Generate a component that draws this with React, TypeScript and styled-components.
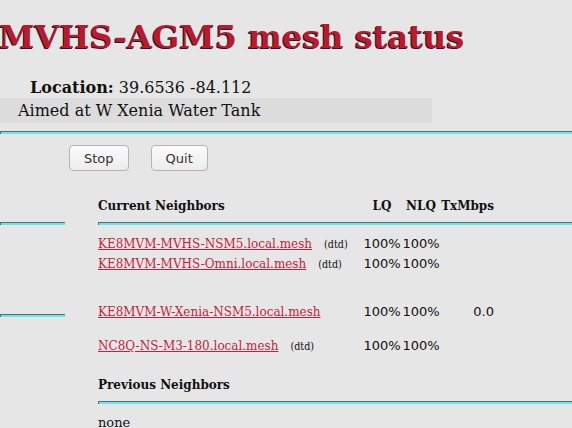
import styled, { createGlobalStyle } from "styled-components";

const GlobalStyle = createGlobalStyle`
  html, body {
    margin: 0;
    padding: 0;
    background: #e6e6e6;
    overflow: hidden;
  }
  body {
    width: 572px;
    height: 428px;
    font-family: "DejaVu Serif", serif;
    color: #111;
  }
`;

type Neighbor = {
  name: string;
  dtd: boolean;
  lq: string;
  nlq: string;
  mbps?: string;
  gap: number;
};

const neighbors: Neighbor[] = [
  { name: "KE8MVM-MVHS-NSM5.local.mesh", dtd: true, lq: "100%", nlq: "100%", gap: 0 },
  { name: "KE8MVM-MVHS-Omni.local.mesh", dtd: true, lq: "100%", nlq: "100%", gap: 0 },
  { name: "KE8MVM-W-Xenia-NSM5.local.mesh", dtd: false, lq: "100%", nlq: "100%", mbps: "0.0", gap: 28 },
  { name: "NC8Q-NS-M3-180.local.mesh", dtd: true, lq: "100%", nlq: "100%", gap: 15 },
];

const Page = styled.div`
  display: flex;
  flex-direction: column;
`;

const Title = styled.h1`
  margin: 17px 0 0 -1px;
  font-family: "DejaVu Serif", serif;
  font-weight: bold;
  font-size: 32px;
  line-height: 40px;
  color: #b81c2c;
  text-shadow: -1px 1px 0 #1e1e3a;
  white-space: nowrap;
`;

const LocationLine = styled.div`
  margin: 21px 0 0 30px;
  font-size: 16px;
  line-height: 20px;

  b {
    font-weight: bold;
  }
`;

const AimBox = styled.div`
  width: 414px;
  height: 25px;
  padding-left: 18px;
  background: #dcdcdc;
  font-size: 16px;
  line-height: 25px;
`;

const Rule = styled.div<{ $width?: number }>`
  width: ${(p) => (p.$width ? `${p.$width}px` : "100%")};
  height: 2px;
  border-top: 1px solid #4e7272;
  border-left: 1px solid #4e7272;
  background: #6fe6e6;
  box-sizing: content-box;
`;

const TopRule = styled(Rule)`
  margin-top: 8px;
`;

const ButtonRow = styled.div`
  display: flex;
  gap: 22px;
  margin: 11px 0 0 69px;
`;

const Button = styled.button`
  height: 26px;
  padding: 0 14px;
  font-family: "DejaVu Sans", sans-serif;
  font-size: 13px;
  color: #333;
  background: linear-gradient(#fbfbfb, #ececec);
  border: 1px solid #b4b4b4;
  border-radius: 4px;
`;

const Columns = styled.div`
  display: flex;
  gap: 34px;
  margin-top: 24px;
`;

const LeftColumn = styled.div`
  width: 64px;
  display: flex;
  flex-direction: column;
  padding-top: 27px;
  gap: 89px;
`;

const Neighbors = styled.div`
  flex: 1;
  display: flex;
  flex-direction: column;
  font-size: 10pt;
  font-stretch: condensed;
`;

const Grid = styled.div<{ $top?: number }>`
  display: grid;
  grid-template-columns: 264px 40px 38px 54px;
  align-items: baseline;
  margin-top: ${(p) => p.$top ?? 0}px;
`;

const HeadCell = styled.div<{ $align?: string }>`
  font-weight: bold;
  line-height: 20px;
  text-align: ${(p) => p.$align || "left"};
  white-space: nowrap;
`;

const SectionTitle = styled.div`
  margin-top: 18px;
  font-weight: bold;
  line-height: 20px;
`;

const NameCell = styled.div`
  white-space: nowrap;
  line-height: 19px;
`;

const HostLink = styled.a`
  color: #c21f3a;
  text-decoration: underline;
`;

const Dtd = styled.span`
  margin-left: 12px;
  font-size: 8pt;
`;

const Value = styled.div<{ $align?: string }>`
  font-family: "DejaVu Sans", sans-serif;
  font-stretch: normal;
  font-size: 13px;
  line-height: 19px;
  text-align: ${(p) => p.$align || "center"};
`;

const Row = styled.div<{ $gap: number }>`
  display: contents;

  & > * {
    margin-top: ${(p) => p.$gap}px;
  }
`;

const SectionRule = styled(Rule)<{ $top: number }>`
  margin-top: ${(p) => p.$top}px;
`;

const Plain = styled.div`
  font-stretch: normal;
  font-size: 13px;
  line-height: 19px;
  margin-top: 9px;
`;

export default function App() {
  return (
    <Page>
      <GlobalStyle />
      <Title>MVHS-AGM5 mesh status</Title>
      <LocationLine>
        <b>Location:</b> 39.6536 -84.112
      </LocationLine>
      <AimBox>Aimed at W Xenia Water Tank</AimBox>
      <TopRule />
      <ButtonRow>
        <Button>Stop</Button>
        <Button>Quit</Button>
      </ButtonRow>
      <Columns>
        <LeftColumn>
          <Rule $width={64} />
          <Rule $width={64} />
        </LeftColumn>
        <Neighbors>
          <Grid>
            <HeadCell>Current Neighbors</HeadCell>
            <HeadCell $align="center">LQ</HeadCell>
            <HeadCell $align="center">NLQ</HeadCell>
            <HeadCell $align="right">TxMbps</HeadCell>
          </Grid>
          <SectionRule $top={7} />
          <Grid $top={9}>
            {neighbors.map((n) => (
              <Row key={n.name} $gap={n.gap}>
                <NameCell>
                  <HostLink href="#">{n.name}</HostLink>
                  {n.dtd && <Dtd>(dtd)</Dtd>}
                </NameCell>
                <Value>{n.lq}</Value>
                <Value>{n.nlq}</Value>
                <Value $align="right">{n.mbps ?? ""}</Value>
              </Row>
            ))}
          </Grid>
          <SectionTitle>Previous Neighbors</SectionTitle>
          <SectionRule $top={7} />
          <Plain>none</Plain>
        </Neighbors>
      </Columns>
    </Page>
  );
}
